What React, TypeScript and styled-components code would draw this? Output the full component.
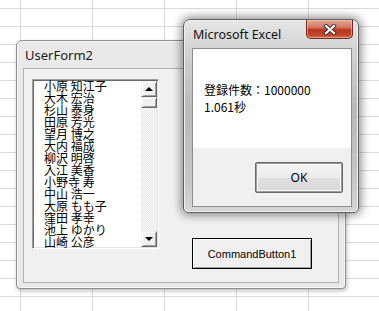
import styled, { createGlobalStyle } from 'styled-components';

const GlobalStyle = createGlobalStyle`
  html, body {
    margin: 0;
    padding: 0;
  }
  body {
    width: 379px;
    height: 311px;
    overflow: hidden;
    font-family: "Noto Sans", "Noto Sans CJK JP", sans-serif;
    color: #000;
  }
`;

const Sheet = styled.main`
  position: relative;
  width: 379px;
  height: 311px;
  overflow: hidden;
  background-color: #fff;
  background-image: linear-gradient(to bottom, #dadada 1px, transparent 1px),
    linear-gradient(to right, #dadada 1px, transparent 1px);
  background-size: 72px 18px;
  background-position: 20px 8px;
`;

/* ---------- UserForm2 ---------- */

const FormWindow = styled.section`
  position: absolute;
  left: 16px;
  top: 40px;
  width: 330px;
  height: 249px;
  box-sizing: border-box;
  display: flex;
  flex-direction: column;
  padding: 0 6px 5px;
  background: #e9e9e9;
  border: 1px solid #8e8e8e;
  border-radius: 6px 6px 4px 4px;
  box-shadow: 1px 2px 4px rgba(0, 0, 0, 0.25), inset 0 0 0 1px #f7f7f7;
`;

const FormTitle = styled.div`
  height: 27px;
  display: flex;
  align-items: center;
  padding-left: 2px;
  font-family: "Noto Sans", sans-serif;
  font-size: 13px;
  color: #1a1a1a;
`;

const FormClient = styled.div`
  flex: 1;
  display: flex;
  align-items: flex-start;
  gap: 33px;
  padding: 10px 0 0 8px;
  background: #f0f0f0;
  border: 1px solid #b2b2b2;
`;

const ListBox = styled.div`
  width: 127px;
  height: 170px;
  box-sizing: border-box;
  display: flex;
  background: #fff;
  border: 1px solid;
  border-color: #a0a0a0 #fff #fff #a0a0a0;
  box-shadow: inset 1px 1px 0 #696969, inset -1px -1px 0 #e3e3e3;
  overflow: hidden;
`;

const Items = styled.ul`
  flex: 1;
  margin: 0;
  padding: 0 0 0 11px;
  list-style: none;
  overflow: hidden;
  font-family: "Noto Sans CJK JP", sans-serif;
  font-size: 12px;
  line-height: 12px;
  white-space: pre;
`;

const ScrollBar = styled.div`
  width: 16px;
  margin: 1px 1px 1px 0;
  display: flex;
  flex-direction: column;
`;

const ScrollPart = styled.div<{ $h: number }>`
  height: ${(p) => p.$h}px;
  box-sizing: border-box;
  display: flex;
  align-items: center;
  justify-content: center;
  background: #f0f0f0;
  border: 1px solid;
  border-color: #f0f0f0 #696969 #696969 #f0f0f0;
  box-shadow: inset 1px 1px 0 #fff, inset -1px -1px 0 #a0a0a0;
`;

const Track = styled.div`
  flex: 1;
  background: repeating-conic-gradient(#fff 0 25%, #e4e4e4 0 50%) 0 0 / 2px 2px;
`;

const Arrow = styled.span<{ $down?: boolean }>`
  width: 0;
  height: 0;
  border-left: 4px solid transparent;
  border-right: 4px solid transparent;
  ${(p) => (p.$down ? 'border-top: 4px solid #000;' : 'border-bottom: 4px solid #000;')}
`;

const CommandButton = styled.button`
  width: 120px;
  height: 31px;
  margin-top: 159px;
  padding: 0;
  background: #f0f0f0;
  border: 1px solid #000;
  box-shadow: inset 1px 1px 0 #fff, inset -1px -1px 0 #a0a0a0;
  font-family: "Liberation Sans", sans-serif;
  font-size: 11px;
  color: #000;
`;

/* ---------- Microsoft Excel message box ---------- */

const MsgWindow = styled.section`
  position: absolute;
  left: 183px;
  top: 19px;
  width: 176px;
  height: 194px;
  box-sizing: border-box;
  display: flex;
  flex-direction: column;
  padding: 0 6px 5px 8px;
  border: 1px solid #5f5f5f;
  border-radius: 7px 7px 5px 5px;
  background: linear-gradient(
    to bottom,
    #e6e6e6 0,
    #d4d4d4 28px,
    #b9b9b9 90px,
    #c6c6c6 160px,
    #d6d6d6 100%
  );
  box-shadow: 0 0 10px 2px rgba(0, 0, 0, 0.45), inset 0 0 0 1px #f0f0f0;
`;

const MsgTitleBar = styled.div`
  height: 28px;
  display: flex;
  align-items: center;
`;

const MsgTitle = styled.span`
  padding-left: 1px;
  font-family: "Noto Sans", sans-serif;
  font-size: 12.5px;
  color: #111;
`;

const CloseButton = styled.div`
  align-self: flex-start;
  margin-left: auto;
  margin-right: -1px;
  width: 47px;
  height: 19px;
  box-sizing: border-box;
  display: flex;
  align-items: center;
  justify-content: center;
  border: 1px solid #6a2a1e;
  border-top: none;
  border-radius: 0 0 5px 5px;
  background: linear-gradient(
    to bottom,
    #e6a897 0,
    #d27a66 40%,
    #b9361f 55%,
    #c5462c 85%,
    #d8745c 100%
  );
  box-shadow: inset 0 0 0 1px rgba(255, 210, 200, 0.5);
`;

const MsgClient = styled.div`
  flex: 1;
  display: flex;
  flex-direction: column;
  border: 1px solid #8d8d8d;
  box-shadow: inset 0 0 0 1px #fff;
`;

const MsgBody = styled.div`
  height: 99px;
  box-sizing: border-box;
  padding: 32px 0 0 11px;
  background: #fff;
  font-family: "Noto Sans CJK JP", sans-serif;
  font-size: 12px;
  line-height: 17px;
  color: #000;
`;

const MsgFooter = styled.div`
  flex: 1;
  display: flex;
  justify-content: flex-end;
  align-items: flex-end;
  padding: 0 8px 13px 0;
  background: #f0f0f0;
`;

const OkButton = styled.button`
  width: 88px;
  height: 31px;
  padding: 0;
  border: 1px solid #6a6a6a;
  border-radius: 2px;
  background: linear-gradient(to bottom, #f4f4f4 0, #ececec 50%, #e0e0e0 50%, #d8d8d8 100%);
  box-shadow: inset 0 0 0 1px #9a9a9a, inset 0 0 0 2px #fafafa;
  font-family: "Noto Sans", sans-serif;
  font-size: 12px;
  color: #000;
`;

const names = [
  '小原 知江子',
  '大木 宏治',
  '杉山 泰身',
  '田原 芳光',
  '望月 博之',
  '大内 福成',
  '柳沢 明啓',
  '入江 美香',
  '小野寺 寿',
  '中山 浩一',
  '大原 もも子',
  '窪田 孝幸',
  '池上 ゆかり',
  '山崎 公彦',
];

function CloseGlyph() {
  return (
    <svg width="14" height="11" viewBox="0 0 14 11">
      <path d="M3 2 L11 9 M11 2 L3 9" stroke="#3b3b3b" strokeWidth="4" strokeLinecap="square" />
      <path d="M3 2 L11 9 M11 2 L3 9" stroke="#fff" strokeWidth="2" strokeLinecap="square" />
    </svg>
  );
}

export default function App() {
  return (
    <Sheet>
      <GlobalStyle />
      <FormWindow>
        <FormTitle>UserForm2</FormTitle>
        <FormClient>
          <ListBox>
            <Items>
              {names.map((n) => (
                <li key={n}>{n}</li>
              ))}
            </Items>
            <ScrollBar>
              <ScrollPart $h={16}>
                <Arrow />
              </ScrollPart>
              <ScrollPart $h={11} />
              <Track />
              <ScrollPart $h={16}>
                <Arrow $down />
              </ScrollPart>
            </ScrollBar>
          </ListBox>
          <CommandButton>CommandButton1</CommandButton>
        </FormClient>
      </FormWindow>

      <MsgWindow>
        <MsgTitleBar>
          <MsgTitle>Microsoft Excel</MsgTitle>
          <CloseButton>
            <CloseGlyph />
          </CloseButton>
        </MsgTitleBar>
        <MsgClient>
          <MsgBody>
            <div>登録件数：1000000</div>
            <div>1.061秒</div>
          </MsgBody>
          <MsgFooter>
            <OkButton>OK</OkButton>
          </MsgFooter>
        </MsgClient>
      </MsgWindow>
    </Sheet>
  );
}
